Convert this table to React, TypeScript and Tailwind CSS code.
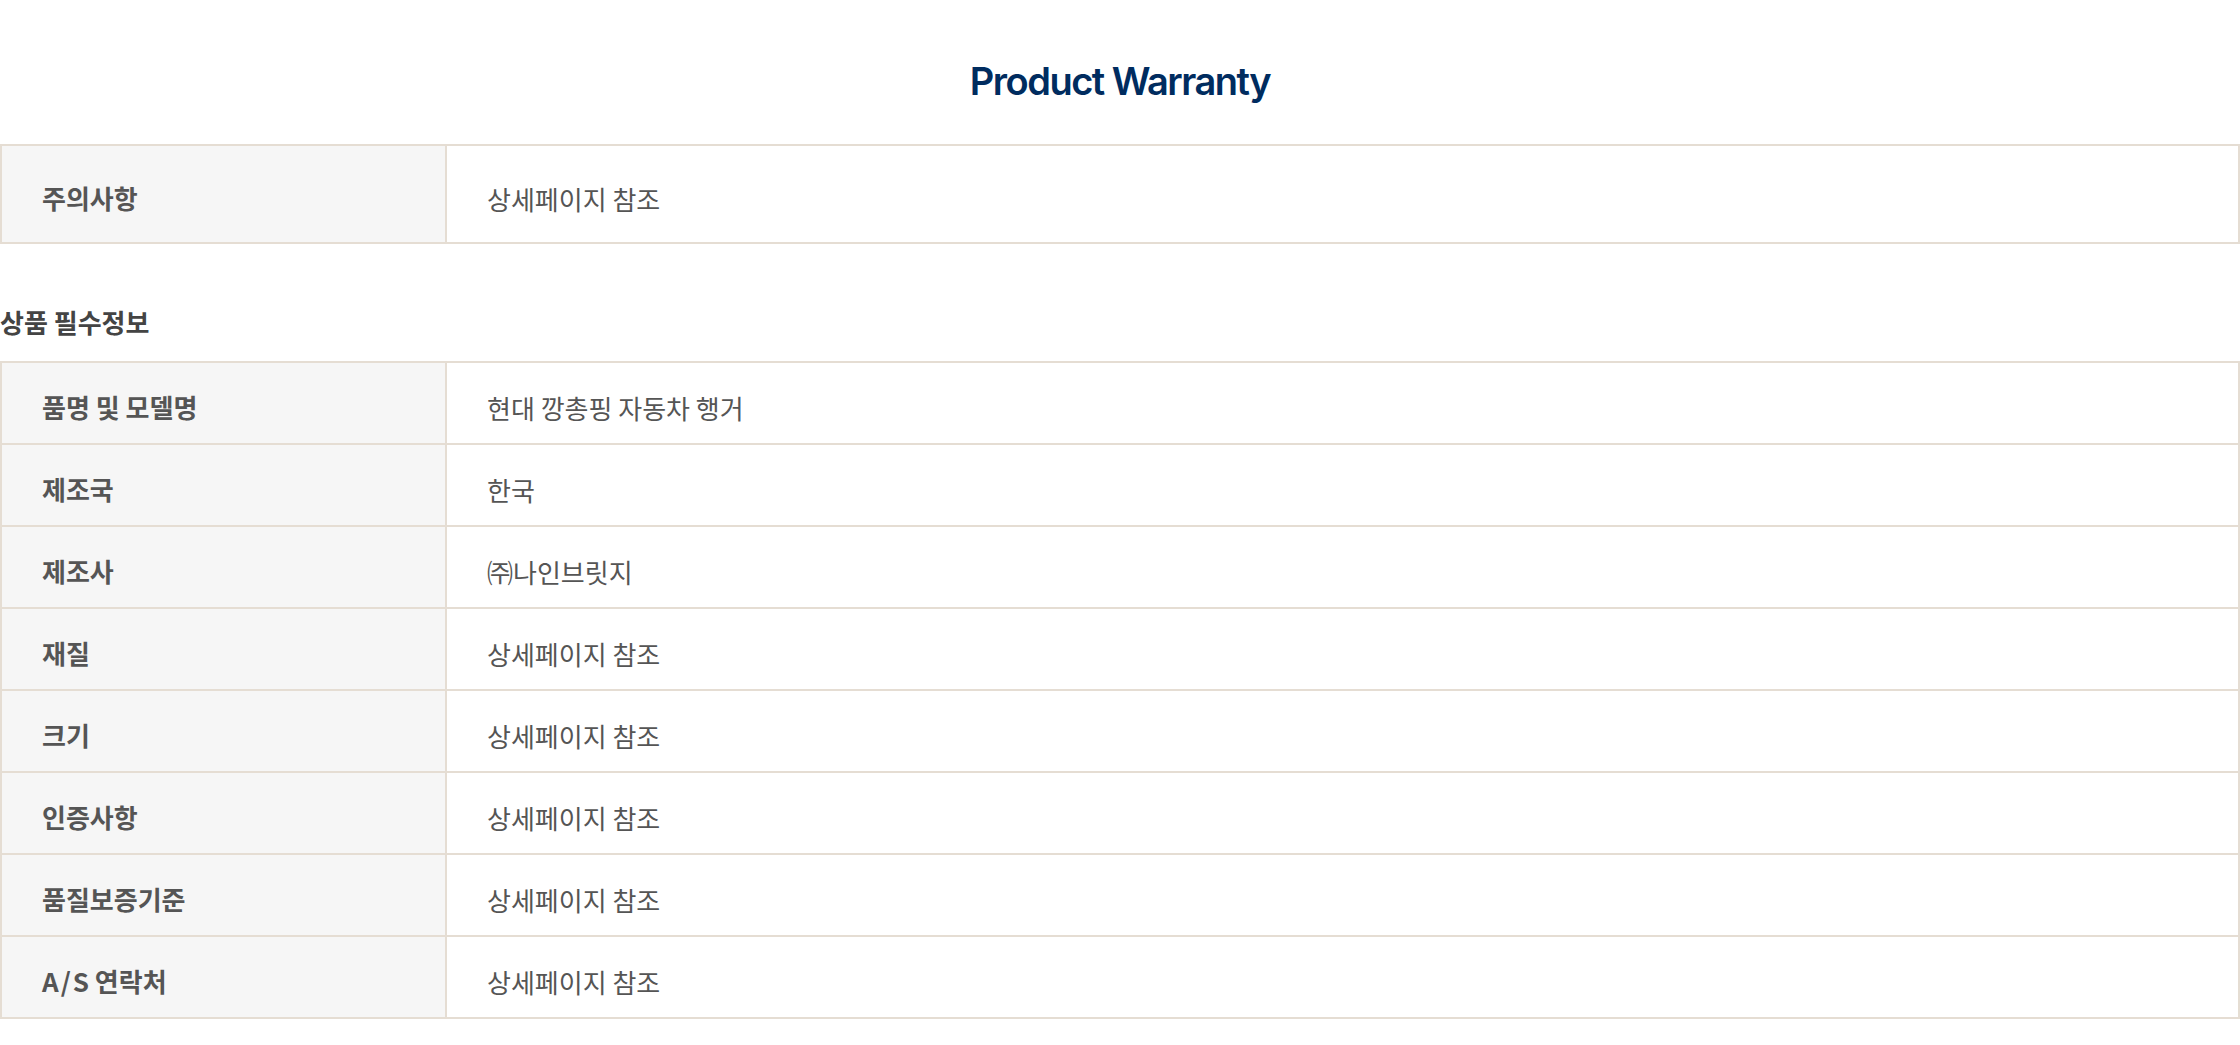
import React from 'react'

const mainRows = [
  { label: '주의사항', value: '상세페이지 참조' },
]

const infoRows = [
  { label: '품명 및 모델명', value: '현대 깡총핑 자동차 행거' },
  { label: '제조국', value: '한국' },
  { label: '제조사', value: '㈜나인브릿지' },
  { label: '재질', value: '상세페이지 참조' },
  { label: '크기', value: '상세페이지 참조' },
  { label: '인증사항', value: '상세페이지 참조' },
  { label: '품질보증기준', value: '상세페이지 참조' },
  { label: 'A/S 연락처', value: '상세페이지 참조' },
]

function Label({ text }: { text: string }) {
  // latin part is a bit wider in the original font
  if (text.startsWith('A/S')) {
    return (
      <span className='text-[26px] font-semibold text-[#555555]'>
        <span className='tracking-[2px]'>A/</span>S{text.slice(3)}
      </span>
    )
  }
  return <span className='text-[26px] font-semibold text-[#555555]'>{text}</span>
}

function InfoTable({ rows, rowH, firstH }: { rows: { label: string; value: string }[]; rowH: string; firstH: string }) {
  return (
    <div className='w-full border-2 border-[#e5ddd3]'>
      {rows.map((r, i) => (
        <div key={i} className={`flex ${i > 0 ? rowH + ' border-t-2 border-[#e5ddd3]' : firstH}`}>
          <div className='w-[445px] shrink-0 flex items-center px-10 pt-[6px] bg-[#f6f6f6] border-r-2 border-[#e5ddd3]'>
            <Label text={r.label} />
          </div>
          <div className='flex-1 flex items-center px-10 pt-[9px]'>
            <span className='text-[26px] font-normal text-[#555555]'>{r.value}</span>
          </div>
        </div>
      ))}
    </div>
  )
}

export default function App() {
  return (
    <div className='w-[2240px] bg-white font-["Noto_Sans_CJK_KR","Noto_Sans",sans-serif]'>
      {/* title */}
      <div className='pt-[62px] pb-[44px] flex justify-center'>
        <h2 className='font-["Inter",sans-serif] text-[38px] leading-[38px] font-semibold tracking-[-1.5px] text-[#002c5f]'>
          Product Warranty
        </h2>
      </div>

      <InfoTable rows={mainRows} rowH='h-[98px]' firstH='h-[96px]' />

      {/* 상품 필수정보 */}
      <h3 className='mt-[61px] mb-[22px] text-[26px] leading-[34px] font-bold text-[#444444]'>상품 필수정보</h3>

      <InfoTable rows={infoRows} rowH='h-[82px]' firstH='h-[80px]' />
    </div>
  )
}
